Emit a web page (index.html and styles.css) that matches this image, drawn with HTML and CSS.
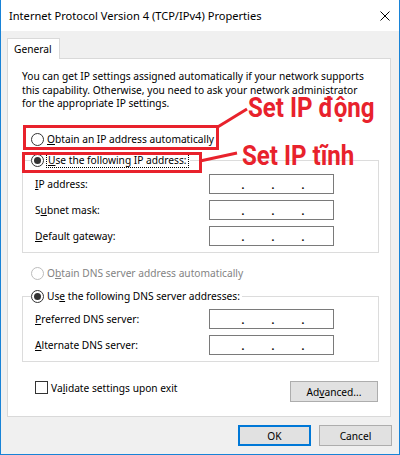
FILE: index.html
```html
<!DOCTYPE html>
<html lang="en">
<head>
<meta charset="utf-8">
<title>Internet Protocol Version 4 (TCP/IPv4) Properties</title>
<link rel="stylesheet" href="styles.css">
</head>
<body>
<div class="window">
  <header class="titlebar">
    <span class="title">Internet Protocol Version 4 (TCP/IPv4) Properties</span>
    <svg class="close" width="10" height="10" viewBox="0 0 10 10"><path d="M0.5 0.5L9.5 9.5M9.5 0.5L0.5 9.5" stroke="#000" stroke-width="1" fill="none"/></svg>
  </header>
  <div class="client">
    <div class="tabstrip"><div class="tab">General</div></div>
    <div class="panel">
      <p class="intro">You can get IP settings assigned automatically if your network supports<br>this capability. Otherwise, you need to ask your network administrator<br>for the appropriate IP settings.</p>
      <div class="radio first"><span class="dot"></span><span class="lbl"><u>O</u>btain an IP address automatically</span></div>
      <fieldset class="group ipgroup">
        <legend><span class="radio"><span class="dot on"></span><span class="lbl focus"><u>U</u>se the following IP address:</span></span></legend>
        <div class="rows">
          <span class="rlabel"><u>I</u>P address:</span><div class="ipbox"><span>.</span><span>.</span><span>.</span></div>
          <span class="rlabel">S<u>u</u>bnet mask:</span><div class="ipbox"><span>.</span><span>.</span><span>.</span></div>
          <span class="rlabel"><u>D</u>efault gateway:</span><div class="ipbox"><span>.</span><span>.</span><span>.</span></div>
        </div>
      </fieldset>
      <div class="radio disabled"><span class="dot"></span><span class="lbl">O<u>b</u>tain DNS server address automatically</span></div>
      <fieldset class="group dnsgroup">
        <legend><span class="radio"><span class="dot on"></span><span class="lbl">Us<u>e</u> the following DNS server addresses:</span></span></legend>
        <div class="rows">
          <span class="rlabel"><u>P</u>referred DNS server:</span><div class="ipbox"><span>.</span><span>.</span><span>.</span></div>
          <span class="rlabel"><u>A</u>lternate DNS server:</span><div class="ipbox"><span>.</span><span>.</span><span>.</span></div>
        </div>
      </fieldset>
      <div class="bottomrow">
        <div class="check"><span class="box"></span><span>Va<u>l</u>idate settings upon exit</span></div>
        <button class="btn adv">Ad<u>v</u>anced...</button>
      </div>
    </div>
    <div class="footer">
      <button class="btn ok">OK</button>
      <button class="btn">Cancel</button>
    </div>
  </div>

  <div class="mark mark1"></div>
  <div class="mark mark2"></div>
  <svg class="arrows" width="400" height="455" viewBox="0 0 400 455">
    <line x1="216" y1="128" x2="247" y2="109" stroke="#e8222c" stroke-width="3"/>
    <line x1="200" y1="161" x2="237" y2="153" stroke="#e8222c" stroke-width="3"/>
  </svg>
  <span class="note note1">Set IP động</span>
  <span class="note note2">Set IP tĩnh</span>
</div>
</body>
</html>
```

FILE: styles.css
```css
html, body {
  margin: 0;
  padding: 0;
}
body {
  width: 400px;
  height: 455px;
  font-family: "Noto Sans", "DejaVu Sans", sans-serif;
  font-size: 10.2px;
  color: #000;
  overflow: hidden;
}
.window {
  position: relative;
  width: 400px;
  height: 455px;
  box-sizing: border-box;
  border: 1px solid #1883d7;
  border-top: none;
  background: #f0f0f0;
  display: flex;
  flex-direction: column;
}
.titlebar {
  height: 31px;
  flex: none;
  background: #fff;
  display: flex;
  align-items: center;
  justify-content: space-between;
  padding: 0 9px 0 8px;
}
.title {
  font-size: 11.1px;
  color: #000;
}
.close {
  display: block;
}
.client {
  flex: 1;
  padding: 7px 8px 0 6px;
  display: flex;
  flex-direction: column;
}
.tabstrip {
  display: flex;
}
.tab {
  position: relative;
  z-index: 1;
  box-sizing: border-box;
  width: 53px;
  height: 21px;
  margin-bottom: -1px;
  border: 1px solid #d9d9d9;
  border-bottom: none;
  background: #fff;
  padding-left: 6px;
  line-height: 20px;
}
.panel {
  box-sizing: border-box;
  height: 359px;
  border: 1px solid #d9d9d9;
  background: #fff;
  padding: 11px 11px 0 14px;
}
.intro {
  margin: 0 0 20.5px;
  line-height: 13.5px;
}
.radio {
  display: flex;
  align-items: center;
  height: 16px;
  gap: 3px;
}
.radio.first,
.radio.disabled {
  padding-left: 9px;
}
.dot {
  box-sizing: border-box;
  width: 13px;
  height: 13px;
  border: 1px solid #333;
  border-radius: 50%;
  background: #fff;
  display: flex;
  align-items: center;
  justify-content: center;
  flex: none;
}
.dot.on::after {
  content: "";
  width: 7px;
  height: 7px;
  border-radius: 50%;
  background: #333;
}
.lbl {
  white-space: nowrap;
}
.focus {
  outline: 1px dotted #000;
  outline-offset: 0;
  padding: 0 1px;
}
.radio.disabled {
  color: #838383;
  margin-top: 12px;
}
.radio.disabled .dot {
  border-color: #bcbcbc;
}
.group {
  margin: 0;
  border: 1px solid #dcdcdc;
  padding: 6px 10px 6px 8px;
  min-width: 0;
}
.ipgroup {
  margin-top: 5px;
}
.dnsgroup {
  margin-top: 7px;
  padding-top: 5px;
}
.group legend {
  padding: 0 2px 0 0;
}
.rows {
  display: grid;
  grid-template-columns: 174px 125px;
  grid-auto-rows: 20px;
  row-gap: 6px;
  align-items: center;
  padding-left: 4px;
}
.rlabel {
  white-space: nowrap;
}
.ipbox {
  box-sizing: border-box;
  height: 20px;
  border: 1px solid #7a7a7a;
  background: #fff;
  display: flex;
  align-items: center;
  padding-left: 18px;
  font-weight: bold;
}
.ipbox span {
  width: 30px;
  text-align: center;
  line-height: 14px;
  padding-top: 2px;
}
.bottomrow {
  margin-top: 19px;
  display: flex;
  justify-content: space-between;
  align-items: flex-start;
  padding: 0 1px 0 13px;
}
.check {
  display: flex;
  align-items: center;
  gap: 3px;
  height: 13px;
  margin-top: 0;
}
.box {
  box-sizing: border-box;
  width: 13px;
  height: 13px;
  border: 1px solid #333;
  background: #fff;
  flex: none;
}
.btn {
  box-sizing: border-box;
  height: 21px;
  border: 1px solid #adadad;
  background: #e1e1e1;
  font-family: inherit;
  font-size: inherit;
  color: #000;
  padding: 0;
  margin: 0;
}
.adv {
  width: 88px;
}
.footer {
  margin-top: 8px;
  margin-right: -1px;
  display: flex;
  justify-content: flex-end;
  gap: 8px;
}
.footer .btn {
  width: 73px;
}
.btn.ok {
  border: 2px solid #0078d7;
}
.mark {
  position: absolute;
  box-sizing: border-box;
  border: 3px solid #e8222c;
}
.mark1 {
  left: 22px;
  top: 125px;
  width: 196px;
  height: 25px;
}
.mark2 {
  left: 21px;
  top: 152px;
  width: 180px;
  height: 21px;
}
.arrows {
  position: absolute;
  left: -1px;
  top: 0;
  pointer-events: none;
}
.note {
  position: absolute;
  font-family: "Roboto", "Liberation Sans", sans-serif;
  font-weight: bold;
  font-size: 28px;
  line-height: 20px;
  color: #e8222c;
  white-space: nowrap;
  transform: scaleX(0.86);
  transform-origin: 0 50%;
}
.note1 {
  left: 247px;
  top: 98px;
}
.note2 {
  left: 241px;
  top: 146px;
}
```
